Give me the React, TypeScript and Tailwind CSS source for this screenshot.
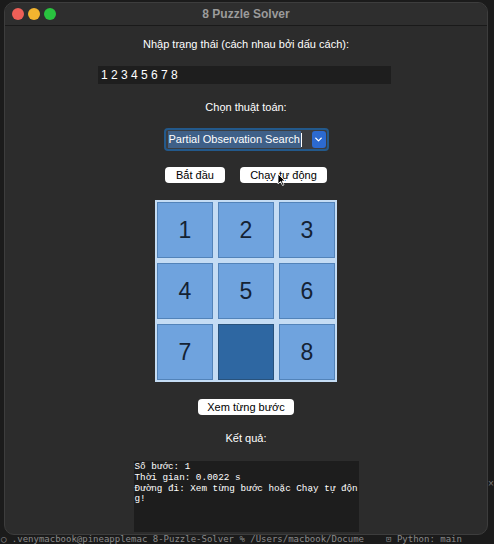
import { ChevronDown } from "lucide-react";

const tiles = [1, 2, 3, 4, 5, 6, 7, 0, 8];

function Tile({ n }: { n: number }) {
  if (n === 0) {
    return <div className="w-[56px] h-[56px] bg-[#2e67a2] border border-[#28527c]" />;
  }
  return (
    <div className="w-[56px] h-[56px] bg-[#6fa3de] border border-[#5283b9] flex items-center justify-center text-[23px] text-[#142233]">
      {n}
    </div>
  );
}

export default function App() {
  return (
    <div className="w-[494px] h-[544px] bg-[#1b1b1b] overflow-hidden font-['Liberation_Sans',sans-serif]">
      <div className="flex">
        <div className="ml-[4px] mt-[2px] w-[484px] h-[533px] bg-[#2c2c2c] rounded-[10px] border border-[#3d3d3d] flex flex-col overflow-hidden">
          {/* title bar */}
          <div className="h-[23px] shrink-0 flex items-center px-[7px] border-b border-[#1a1a1a] bg-[#2e2e2e]">
            <div className="flex gap-[4px]">
              <span className="w-[12px] h-[12px] rounded-full bg-[#ee5f57]" />
              <span className="w-[12px] h-[12px] rounded-full bg-[#f2b42f]" />
              <span className="w-[12px] h-[12px] rounded-full bg-[#29c33f]" />
            </div>
            <div className="flex-1 text-center text-[12px] font-bold text-[#9b9b9b] pr-[44px]">8 Puzzle Solver</div>
          </div>

          <div className="flex flex-col items-center text-white text-[11px]">
            <div className="mt-[10px] leading-[16px]">Nhập trạng thái (cách nhau bởi dấu cách):</div>

            <div className="mt-[14px] w-[293px] h-[18px] bg-[#1e1e1e] flex items-center px-[3px] text-[12px] -ml-[3px]">
              1 2 3 4 5 6 7 8
            </div>

            <div className="mt-[15px] leading-[16px]">Chọn thuật toán:</div>

            <div className="mt-[13px] w-[165px] h-[23px] rounded-[4px] border-2 border-[#23598b] bg-[#3b3d40] flex items-center pl-[2px] pr-[1px]">
              <span className="bg-[#3f6088] text-white text-[11px] leading-[17px] px-[1px] whitespace-nowrap">Partial Observation Search</span>
              <span className="w-[1px] h-[14px] bg-white" />
              <span className="flex-1" />
              <span className="w-[14px] h-[17px] rounded-[3px] bg-[#2c6ad0] flex items-center justify-center">
                <ChevronDown size={11} strokeWidth={3} color="white" />
              </span>
            </div>

            <div className="mt-[16px] flex gap-[15px]">
              <button className="w-[60px] h-[16px] bg-white rounded-[4px] text-black text-[11px] leading-[16px]">Bắt đầu</button>
              <button className="w-[87px] h-[16px] bg-white rounded-[4px] text-black text-[11px] leading-[16px] relative">
                Chạy tự động
                <svg className="absolute left-[37px] top-[6px]" width="9" height="13" viewBox="0 0 9 13">
                  <path d="M1 1 L1 11 L3.5 8.5 L5.5 12.5 L7 11.8 L5 8 L8 8 Z" fill="black" stroke="white" strokeWidth="0.8" />
                </svg>
              </button>
            </div>

            <div className="mt-[17px] bg-[#c4dcf4] p-[2px] grid grid-cols-3 gap-[5px]">
              {tiles.map((n, i) => (
                <Tile key={i} n={n} />
              ))}
            </div>

            <button className="mt-[17px] w-[96px] h-[16px] bg-white rounded-[4px] text-black text-[11px] leading-[16px]">Xem từng bước</button>

            <div className="mt-[15px] leading-[16px]">Kết quả:</div>

            <div className="mt-[15px] w-[225px] h-[71px] bg-[#1d1d1d] px-[1px] pt-[1px]">
              <div className="w-[225px] font-['Liberation_Mono',monospace] text-[9.3px] leading-[10.8px] whitespace-pre-wrap break-all text-white">
                {"Số bước: 1\nThời gian: 0.0022 s\nĐường đi: Xem từng bước hoặc Chạy tự động!"}
              </div>
            </div>
          </div>
        </div>
        <div className="flex flex-col">
          <span className="mt-[478px] text-[#777] text-[10px] leading-[12px]">×</span>
        </div>
      </div>
      <div className="flex text-[#8a8a8a] text-[9px] leading-[9px] font-['DejaVu_Sans_Mono',monospace] whitespace-nowrap">
        <span className="ml-[1px]">○ .venymacbook@pineapplemac 8-Puzzle-Solver % /Users/macbook/Docume</span>
        <span className="ml-[22px]">⊡ Python: main</span>
      </div>
    </div>
  );
}
